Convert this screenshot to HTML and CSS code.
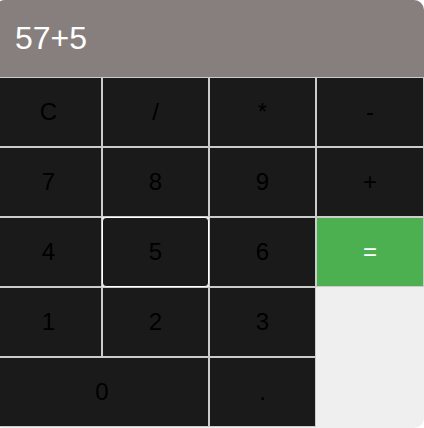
FILE: index.html
```html
<!DOCTYPE html>
<html lang="en">
<head>
<meta charset="utf-8">
<title>Calculator</title>
<link rel="stylesheet" href="styles.css">
</head>
<body>
<div class="calc">
  <div class="display">57+5</div>
  <div class="keys">
    <button class="key">C</button>
    <button class="key">/</button>
    <button class="key">*</button>
    <button class="key">-</button>
    <button class="key">7</button>
    <button class="key">8</button>
    <button class="key">9</button>
    <button class="key">+</button>
    <button class="key">4</button>
    <button class="key key-focus">5</button>
    <button class="key">6</button>
    <button class="key key-equals">=</button>
    <button class="key">1</button>
    <button class="key">2</button>
    <button class="key">3</button>
    <button class="key key-zero">0</button>
    <button class="key">.</button>
  </div>
</div>
</body>
</html>
```

FILE: styles.css
```css
html, body {
  margin: 0;
  padding: 0;
  background: #ffffff;
  overflow: hidden;
}

.calc {
  width: 429px;
  margin-left: -5px;
  border-radius: 10px;
  overflow: hidden;
  background: #efefef;
  padding-bottom: 1px;
  font-family: "Liberation Sans", Arial, sans-serif;
}

.display {
  height: 77px;
  box-sizing: border-box;
  padding-left: 20px;
  display: flex;
  align-items: center;
  background: #867f7e;
  color: #ffffff;
  font-size: 32px;
}

.keys {
  display: grid;
  grid-template-columns: 107px 107px 107px 108px;
  grid-auto-rows: 70px;
}

.key {
  box-sizing: border-box;
  margin: 0;
  border: 1px solid #cccccc;
  background: #1a1a1a;
  color: #000000;
  font-family: "Liberation Sans", Arial, sans-serif;
  font-size: 24px;
  padding: 0;
  cursor: pointer;
}

.key-focus {
  border-color: #ffffff;
  border-radius: 4px;
}

.key-equals {
  background: #4caf50;
  color: #ffffff;
}

.key-zero {
  grid-column: span 2;
}
```
